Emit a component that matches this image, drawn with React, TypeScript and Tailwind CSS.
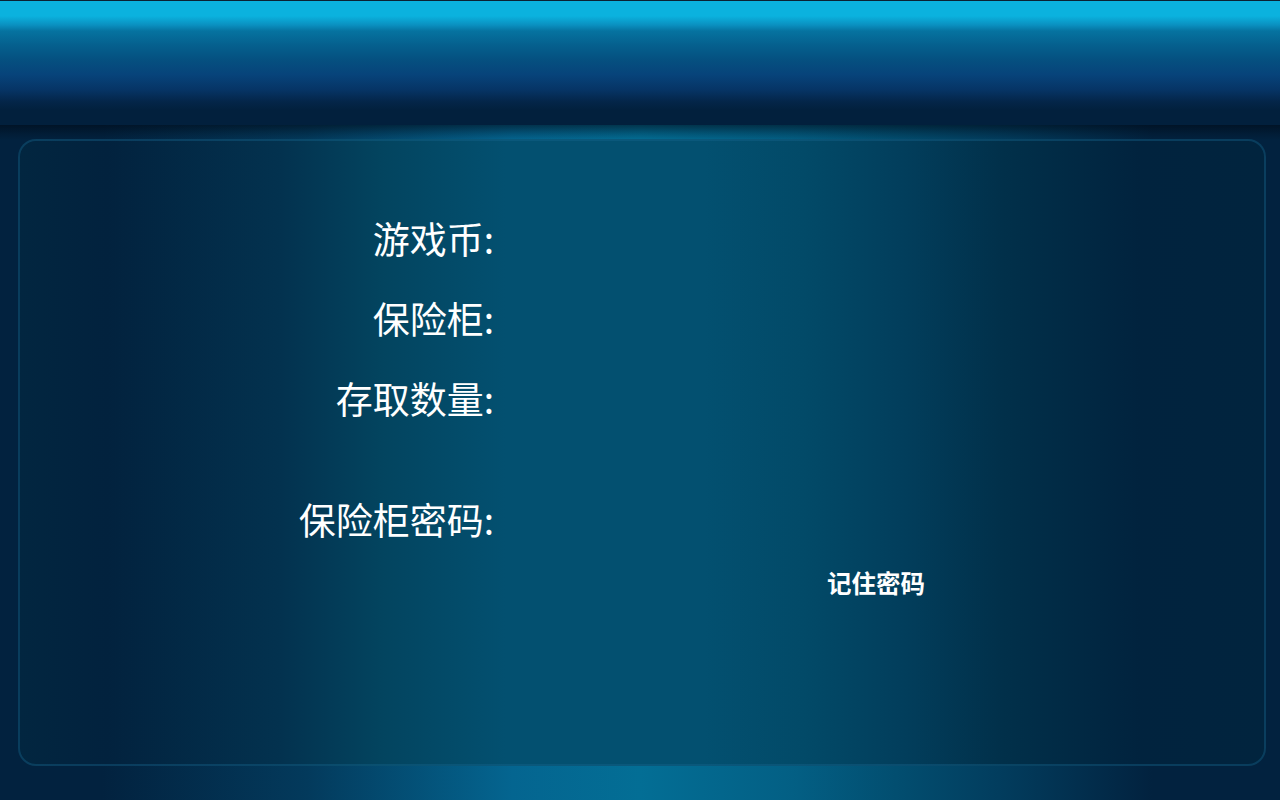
import React from 'react';

const rows = [
  { label: '游戏币:', gap: false },
  { label: '保险柜:', gap: false },
  { label: '存取数量:', gap: false },
  { label: '保险柜密码:', gap: true },
];

const App: React.FC = () => {
  return (
    <div className="w-[1280px] h-[800px] flex flex-col overflow-hidden font-['Noto_Sans_CJK_SC','Noto_Sans',sans-serif] text-white">
      <div className="h-[125px] shrink-0 bg-[linear-gradient(to_bottom,#0b2233_0px,#0b2233_1px,#0bb2de_1px,#0bb2de_16px,#0a90c0_25px,#0673a0_31px,#05608e_45px,#055080_60px,#07437a_75px,#063465_90px,#04264a_101px,#02203d_110px,#02203d_125px)]" />

      <div className="flex-1 pl-[18px] pr-[14px] pt-[14px] pb-[34px] bg-[linear-gradient(to_bottom,rgba(0,8,20,0.55)_0px,rgba(0,8,20,0.2)_9px,rgba(0,8,20,0)_15px),linear-gradient(to_right,#02223f_0%,#02223f_8%,#033a5c_24%,#046590_40%,#036e95_50%,#035f84_62%,#024e70_70%,#023d5e_78%,#02223f_90%,#02223f_100%)]">
        <div className="h-full rounded-[18px] border-2 border-[#16658c]/40 bg-[linear-gradient(to_right,#022640_0%,#02223e_7%,#03324f_21%,#03445f_29%,#035070_39%,#035070_55%,#024a68_63%,#023e5c_71%,#01304a_79%,#01233e_90%,#01243e_100%)] pt-[57px]">
          {rows.map((row) => (
            <div key={row.label} className={`flex items-center h-[80px] ${row.gap ? 'mt-[41px]' : ''}`}>
              <div className="w-[474px] text-right text-[37px] leading-none">{row.label}</div>
            </div>
          ))}
          <div className="flex items-center h-[48px]">
            <span className="ml-[807px] text-[24.5px] font-bold leading-none">记住密码</span>
          </div>
        </div>
      </div>
    </div>
  );
};

export default App;
